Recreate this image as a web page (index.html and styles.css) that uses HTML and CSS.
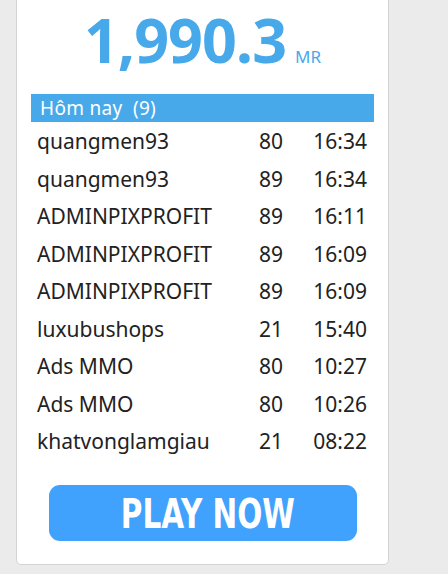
FILE: index.html
```html
<!DOCTYPE html>
<html>
<head>
    <meta charset="UTF-8">
    <title>Hôm nay</title>
    <link rel="stylesheet" href="styles.css">
</head>
<body>
    <!-- 점수 카드 -->
    <div class="card">
        <div class="total">
            <span class="total-num">1,990.3</span>
            <span class="total-unit">MR</span>
        </div>

        <div class="list-head">Hôm nay&nbsp;&nbsp;(9)</div>
        <div class="list">
            <div class="row"><span>quangmen93</span><span>80</span><span class="time">16:34</span></div>
            <div class="row"><span>quangmen93</span><span>89</span><span class="time">16:34</span></div>
            <div class="row"><span>ADMINPIXPROFIT</span><span>89</span><span class="time">16:11</span></div>
            <div class="row"><span>ADMINPIXPROFIT</span><span>89</span><span class="time">16:09</span></div>
            <div class="row"><span>ADMINPIXPROFIT</span><span>89</span><span class="time">16:09</span></div>
            <div class="row"><span>luxubushops</span><span>21</span><span class="time">15:40</span></div>
            <div class="row"><span>Ads MMO</span><span>80</span><span class="time">10:27</span></div>
            <div class="row"><span>Ads MMO</span><span>80</span><span class="time">10:26</span></div>
            <div class="row"><span>khatvonglamgiau</span><span>21</span><span class="time">08:22</span></div>
        </div>

        <a class="play" href="#"><span>PLAY NOW</span></a>
    </div>
</body>
</html>
```

FILE: styles.css
```css
/* 전체 배경 */
body {
    margin: 0;
    padding: 0;
    background: #ebebeb;
    font-family: "Noto Sans", "Open Sans", sans-serif;
    overflow: hidden;
}

/* 카드 */
.card {
    width: 343px;
    margin: -8px 0 0 16px;
    padding: 8px 14px 23px 14px;
    background: #fff;
    border: 1px solid #d4d4d4;
    border-radius: 5px;
}

/* 상단 숫자 */
.total {
    display: flex;
    justify-content: center;
    align-items: baseline;
    height: 93px;
    color: #47a9ea;
}

.total-num {
    font-family: "Open Sans", sans-serif;
    font-weight: 700;
    font-size: 61px;
    line-height: 78px;
    letter-spacing: -1px;
}

.total-unit {
    font-size: 17px;
    margin-left: 9px;
}

/* 목록 머리 */
.list-head {
    background: #47a9ea;
    color: #fff;
    font-size: 19px;
    height: 28px;
    line-height: 29px;
    padding-left: 9px;
    letter-spacing: 0.3px;
}

/* 목록 줄 */
.row {
    display: grid;
    grid-template-columns: 1fr 52px 56px;
    padding: 0 7px 0 6px;
    height: 37.5px;
    line-height: 38px;
    font-size: 21px;
    color: #222;
}

.row .time {
    text-align: right;
}

/* 버튼 */
.play {
    display: block;
    width: 298px;
    height: 56px;
    margin: 25px 0 0 18px;
    padding-left: 10px;
    background: #41a2fd;
    border-radius: 11px;
    color: #fff;
    text-align: center;
    text-decoration: none;
    font-family: "DejaVu Sans Condensed", "DejaVu Sans", sans-serif;
    font-weight: 700;
    font-size: 41px;
    line-height: 58px;
}

.play span {
    display: inline-block;
    transform: scaleX(0.8);
}
```
